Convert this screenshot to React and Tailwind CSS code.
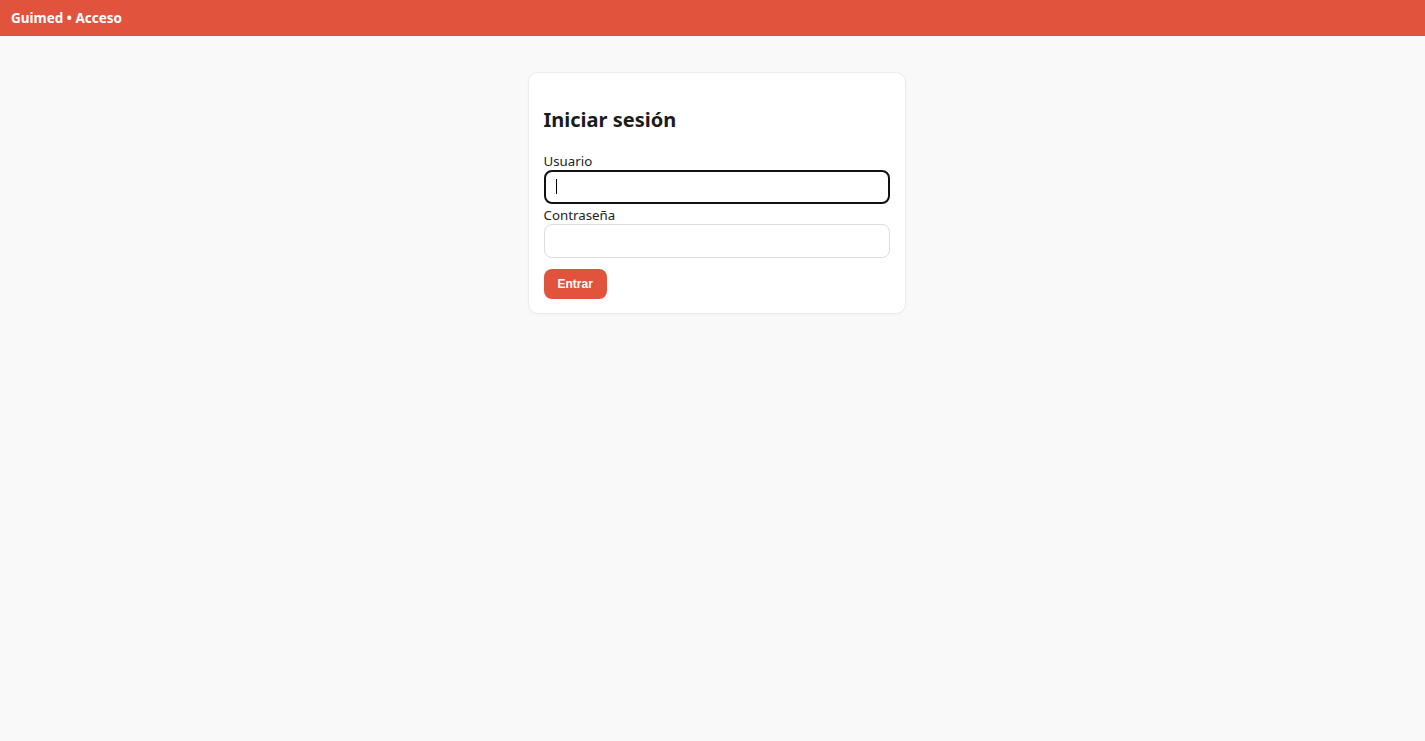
export default function App() {
  return (
    <div className="min-h-screen bg-[#f9f9f9] font-['Noto_Sans',sans-serif] text-[#1b1b1b]">
      {/* Top bar */}
      <header className="h-9 bg-[#e2533d] flex items-center px-[11px]">
        <span className="text-white text-[13.5px] font-bold">Guimed • Acceso</span>
      </header>

      <main className="flex justify-center pt-9 pl-2">
        <div className="w-[378px] bg-white border border-[#ececec] rounded-[10px] px-[15px] pt-[34px] pb-[14px] shadow-[0_1px_3px_rgba(0,0,0,0.03)]">
          <h2 className="text-[20px] font-bold leading-[26px] text-[#1b1b1b] mb-[20px]">Iniciar sesión</h2>

          <label className="block text-[13.3px] leading-[17px] text-[#222]">Usuario</label>
          <div className="relative">
            <input
              type="text"
              className="w-full h-[34px] rounded-[8px] border-2 border-[#111] bg-white px-[11px] outline-none"
            />
            <span className="absolute left-[12px] top-[9px] w-px h-[15px] bg-black"></span>
          </div>

          <label className="block text-[13.3px] leading-[17px] text-[#222] mt-[3px]">Contraseña</label>
          <input
            type="password"
            className="w-full h-[34px] rounded-[8px] border border-[#dcdcdc] bg-white px-3 outline-none"
          />

          <button className="mt-[11px] h-[30px] px-[14px] rounded-[8px] bg-[#e2533d] text-white text-[12px] font-bold font-['Liberation_Sans',sans-serif]">
            Entrar
          </button>
        </div>
      </main>
    </div>
  );
}
